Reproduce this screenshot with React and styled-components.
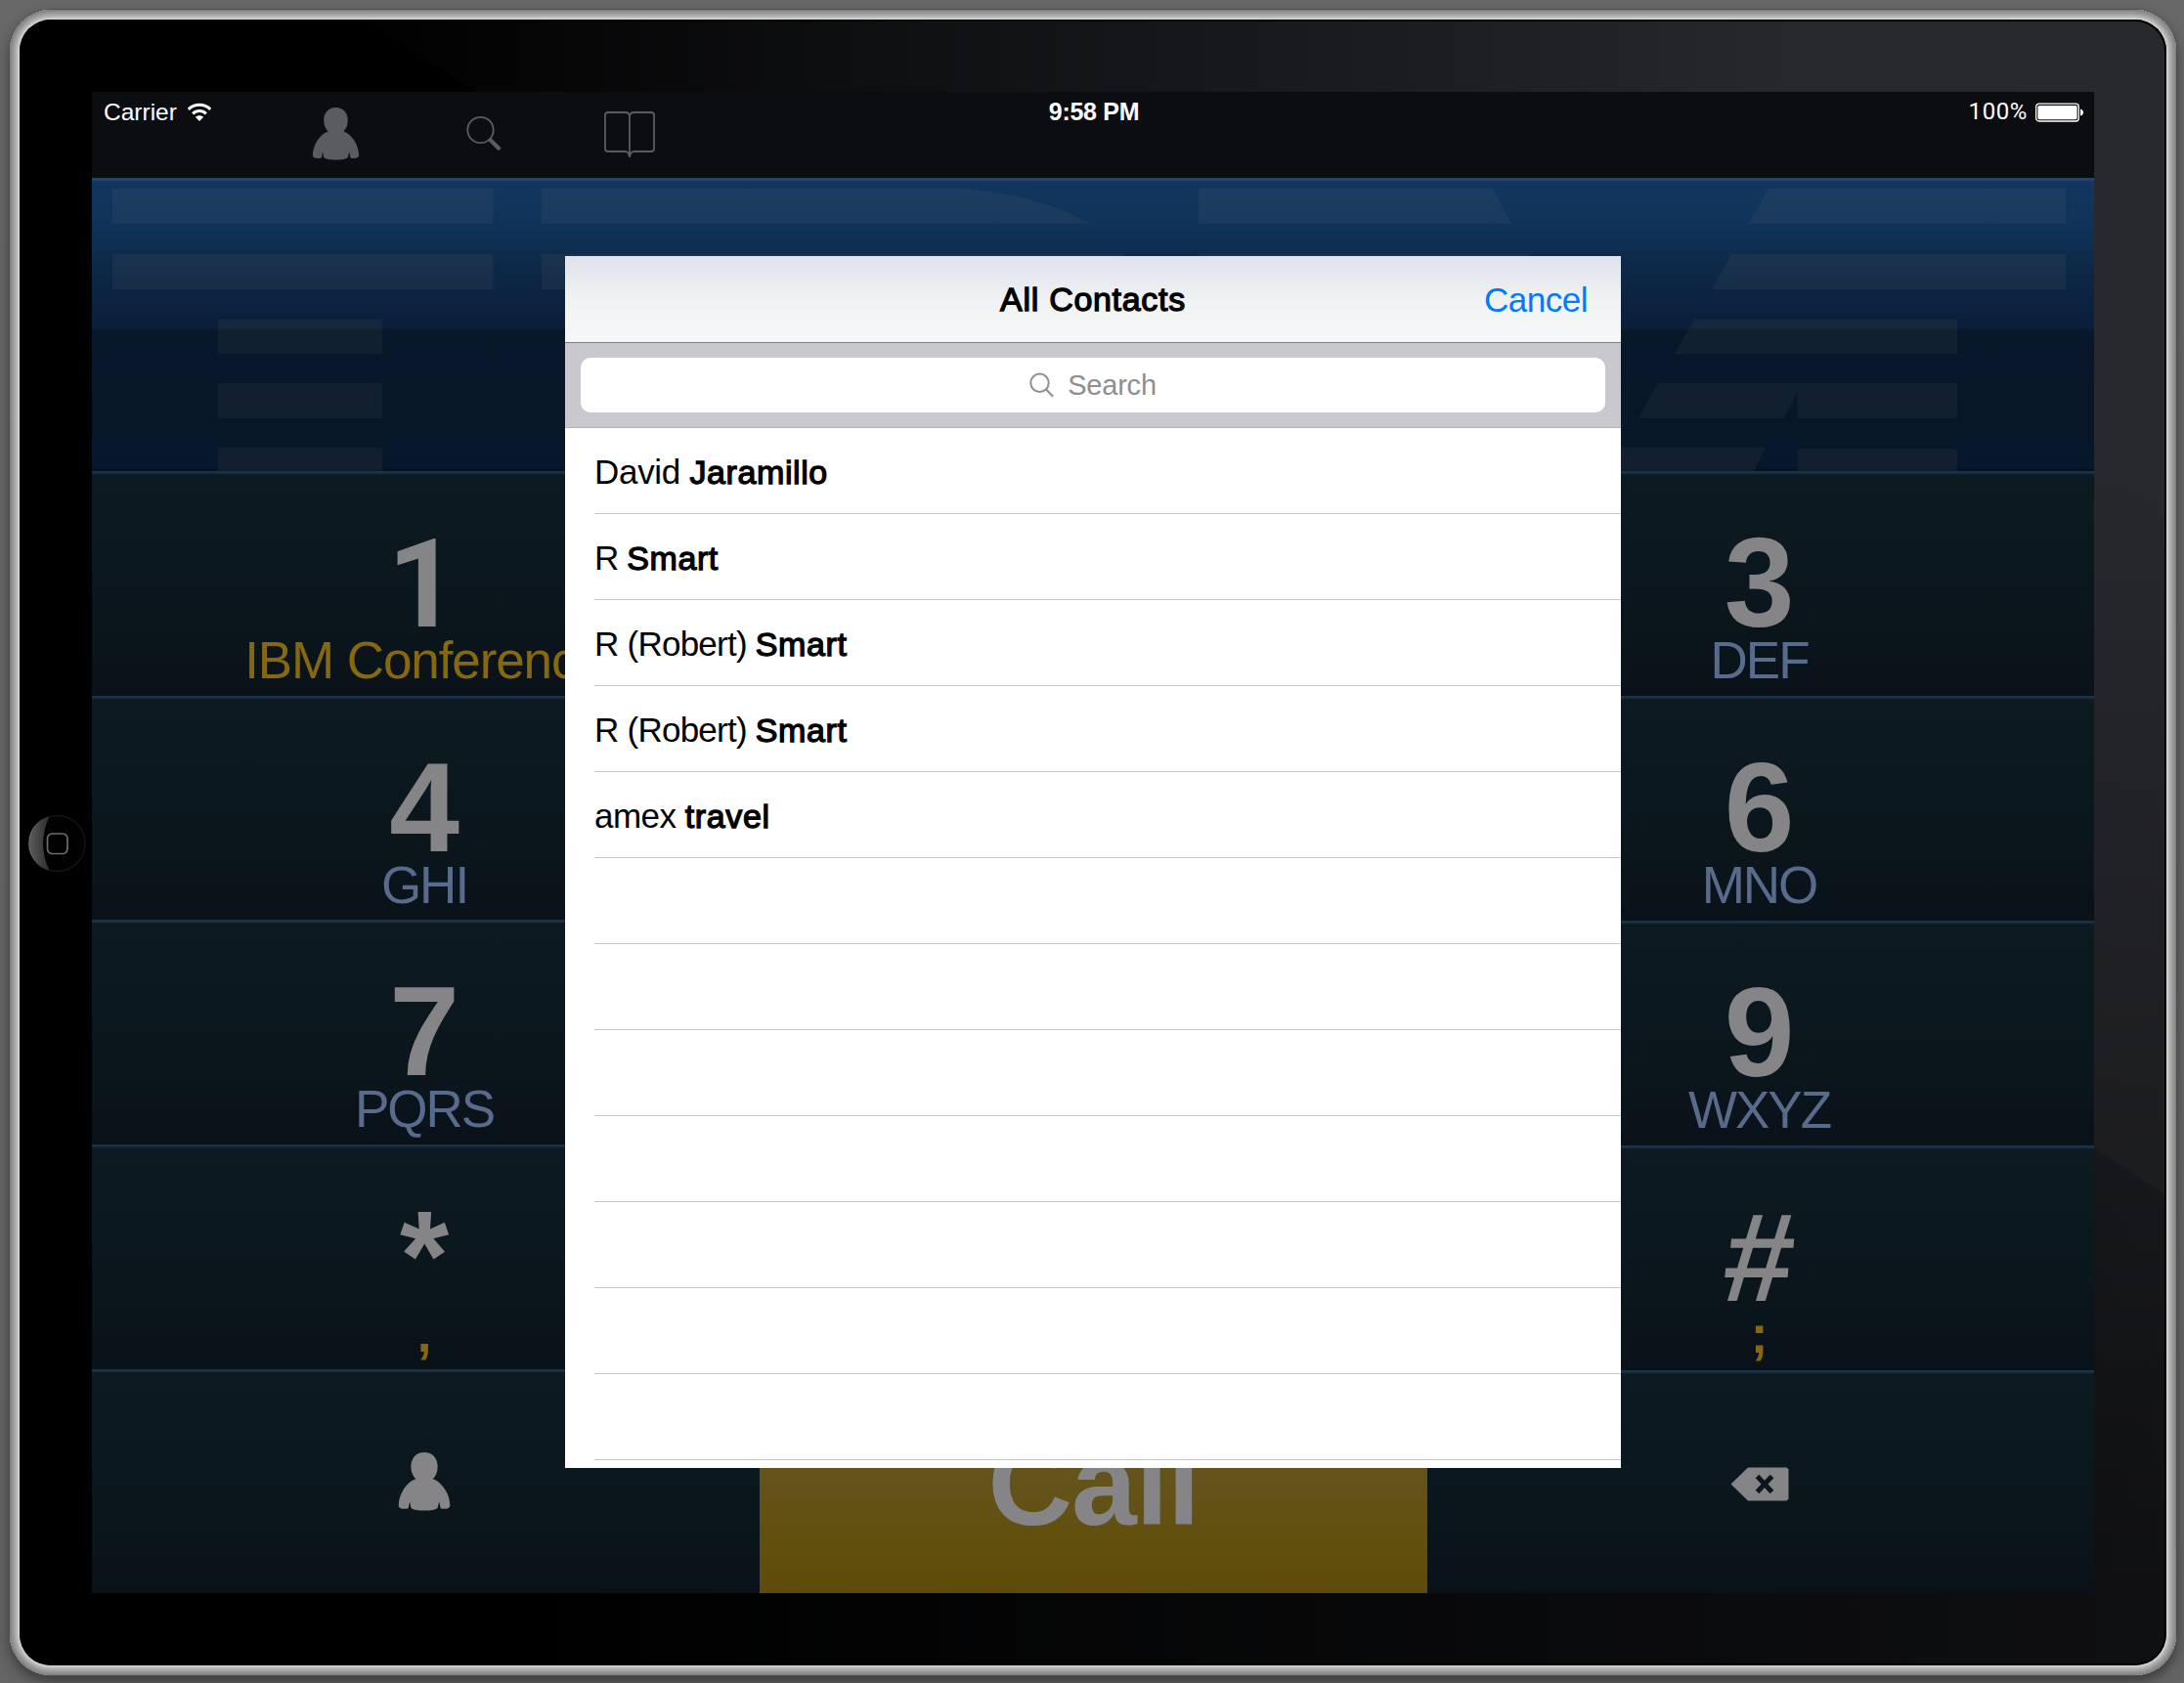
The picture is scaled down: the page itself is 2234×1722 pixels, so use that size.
import React from "react";
import styled, { createGlobalStyle } from "styled-components";

const GlobalStyle = createGlobalStyle`
  * { box-sizing: border-box; }
  html, body { margin: 0; padding: 0; }
  body {
    width: 2234px;
    height: 1722px;
    overflow: hidden;
    background: linear-gradient(#686868, #646464);
    font-family: "Liberation Sans", Arial, sans-serif;
  }
`;

const Desk = styled.main`
  width: 2234px;
  height: 1722px;
  padding: 10px 8px 8px 10px;
  overflow: hidden;
`;

const Rim = styled.div`
  width: 2216px;
  height: 1704px;
  padding: 10px;
  border-radius: 42px;
  background: #d4d4d2;
  box-shadow:
    inset 0 0 0 1px #808080,
    inset 0 0 0 2px #8b8b8b,
    inset 0 0 0 3px #929292,
    inset 0 0 0 4px #999999,
    inset 0 0 0 5px #a1a1a1,
    inset 0 0 0 6px #a9a9a9,
    inset 0 0 0 7px #b2b2b2,
    inset 0 0 0 8px #bcbcbc,
    inset 0 0 0 9px #c8c8c6,
    0 0 0 1px #505050,
    0 6px 14px rgba(0, 0, 0, 0.45);
`;

const Face = styled.div`
  position: relative;
  display: grid;
  grid-template-columns: 74px 2048px 74px;
  grid-template-rows: 74px 1536px 74px;
  width: 2196px;
  height: 1684px;
  border-radius: 32px;
  overflow: hidden;
  background:
    linear-gradient(to bottom, transparent 70%, rgba(0, 0, 0, 0.35) 96%),
    linear-gradient(to right, #000 25%, #0c0d0f 65%, #17181b 100%);

  &::before {
    content: "";
    position: absolute;
    inset: 0;
    clip-path: polygon(0 0, 100% 0, 100% 1203px, 355px 0);
    background:
      linear-gradient(to bottom, transparent 25%, rgba(0, 0, 0, 0.3) 70%),
      linear-gradient(to right, #000 14%, #060607 25%, #0d0e10 37%, #1d1e22 67%, #27282c 82%, #28292d 100%);
  }

  &::after {
    content: "";
    position: absolute;
    inset: 0;
    border-radius: 32px;
    box-shadow: inset 0 0 0 2px #000;
  }
`;

const LeftBezel = styled.div`
  grid-column: 1;
  grid-row: 2;
  z-index: 1;
  display: flex;
  align-items: center;
  justify-content: center;
  padding: 2px 0 0 2px;
`;

const Screen = styled.div`
  grid-column: 2;
  grid-row: 2;
  position: relative;
  z-index: 1;
  display: flex;
  flex-direction: column;
  background: #0b151c;
  overflow: hidden;
`;

const TopBar = styled.header`
  display: grid;
  height: 88px;
  flex: none;
  background: #0b0d11;
`;

const StatusBar = styled.div`
  grid-area: 1 / 1;
  display: grid;
  grid-template-columns: 1fr auto 1fr;
  height: 41px;
  padding: 0 10px 0 12px;
  line-height: 41px;
  color: #fff;
  font-size: 24.5px;
`;

const StatusGroup = styled.div`
  display: flex;
  align-items: center;
  justify-content: ${(p) => (p.$end ? "flex-end" : "flex-start")};
  gap: ${(p) => (p.$end ? "8px" : "10px")};
`;

const Clock = styled.div`
  font-size: 25px;
  font-weight: 700;
  letter-spacing: -0.3px;
`;

const Percent = styled.span`
  font-family: Roboto, "Liberation Sans", sans-serif;
  font-weight: 400;
  font-size: 24px;
  letter-spacing: 0.6px;
`;

const Toolbar = styled.nav`
  grid-area: 1 / 1;
  display: flex;
  align-items: flex-start;
  padding: 16px 0 0 225px;
  color: #5b5c60;

  svg + svg { margin-left: 108px; margin-top: 6px; }
  svg + svg + svg { margin-left: 103px; margin-top: 3px; }
`;

const Banner = styled.section`
  height: 300px;
  flex: none;
  background: linear-gradient(
    #2c4665 0,
    #24446b 2px,
    #12365f 4px,
    #10335a 45px,
    #0d2a49 85px,
    #0c213e 135px,
    #0b1f3b 153px,
    #08182a 157px,
    #071728 250px,
    #08172c 295px,
    #07111f 300px
  );

  svg { display: block; }
`;

const Keypad = styled.section`
  display: grid;
  grid-template-columns: 683px 683px 682px;
  height: 1148px;
`;

const Column = styled.div`
  display: flex;
  flex-direction: column;
  justify-content: flex-end;
`;

const Key = styled.div`
  display: flex;
  flex-direction: column;
  align-items: center;
  flex: none;
  height: ${(p) => p.$height || 230}px;
  padding: 64px 3px 0 0;
  background: linear-gradient(#1c3347 0, #1d3246 2px, #12222e 3px, #0c1a22 4px, #0b171e 50%, #0a1219 100%);
`;

const IconKey = styled(Key)`
  padding-top: ${(p) => p.$top}px;
  color: #858588;
`;

const Digit = styled.div`
  height: 100px;
  line-height: 100px;
  font-size: 129px;
  font-weight: 700;
  color: #858588;
`;

const PlainOne = styled(Digit)`
  font-family: Roboto, "Liberation Sans", sans-serif;
  font-size: 126px;
  line-height: 104px;
  padding-right: 3px;
`;

const Hash = styled(Digit)`
  transform: skewX(-5deg);
`;

const Letters = styled.div`
  height: 60px;
  line-height: 60px;
  font-size: 53px;
  letter-spacing: ${(p) => (p.$gold ? "-1.1px" : "-2px")};
  white-space: nowrap;
  color: ${(p) => (p.$gold ? "#856810" : "#586b8d")};
`;

const Punctuation = styled(Letters)`
  font-weight: 700;
  letter-spacing: 0;
`;

const CallButton = styled.div`
  height: 229px;
  flex: none;
  padding-top: 57px;
  text-align: center;
  line-height: 120px;
  font-size: 120px;
  letter-spacing: -1px;
  font-weight: 700;
  color: #858588;
  background: linear-gradient(#655728 0, #64531c 45%, #62500f 75%, #5f4b09 100%);
`;

const Dialog = styled.section`
  position: absolute;
  left: 484px;
  top: 168px;
  display: flex;
  flex-direction: column;
  width: 1080px;
  height: 1240px;
  background: #fff;
  overflow: hidden;
`;

const DialogHeader = styled.header`
  display: grid;
  grid-template-columns: 1fr auto 1fr;
  height: 89px;
  flex: none;
  padding: 0 34px;
  line-height: 89px;
  border-bottom: 1px solid #7f7f82;
  background: linear-gradient(#dfe3ec 0, #e5e8ed 20%, #eef0f2 45%, #f3f4f4 65%, #f5f6f8 100%);
`;

const Title = styled.h1`
  grid-column: 2;
  margin: 0;
  font-size: 34px;
  font-weight: 400;
  letter-spacing: 0.7px;
  -webkit-text-stroke: 1.3px #000;
`;

const Cancel = styled.div`
  justify-self: end;
  font-size: 35px;
  letter-spacing: -0.5px;
  color: #007aff;
`;

const SearchBar = styled.div`
  height: 87px;
  flex: none;
  padding: 15px 16px;
  background: #c9c8ce;
  border-bottom: 1px solid #b2b2b7;
`;

const SearchField = styled.div`
  display: flex;
  align-items: center;
  justify-content: center;
  gap: 14px;
  height: 56px;
  line-height: 54px;
  border-radius: 10px;
  background: #fff;
  color: #8e8e93;
  font-size: 29px;
  letter-spacing: -0.2px;
`;

const Contacts = styled.ul`
  margin: 0;
  padding: 0 0 0 30px;
  list-style: none;
`;

const Contact = styled.li`
  height: 88px;
  line-height: 89px;
  border-bottom: 1px solid #c8c7cc;
  font-size: 35px;
  letter-spacing: ${(p) => p.$tracking || "-0.5px"};
  white-space: pre;
  color: #000;
`;

const Surname = styled.span`
  font-size: 34px;
  letter-spacing: 0.6px;
  -webkit-text-stroke: 1.3px #000;
`;

function PersonIcon({ width, height }) {
  return (
    <svg width={width} height={height} viewBox="0 0 48 54" fill="currentColor">
      <path d="M24 0C31.500 0 36.300 5.500 36.300 13C36.300 18 34.500 22 31.800 24.500C40 27 47.500 38 47.700 49C47.500 52 42.500 52.600 39 51.500L37.700 45.500L36.300 51C34 54.500 14 54.500 11.800 51L10.600 45.500L9.300 51.500C5 52.600 .5 52 .3 49C.5 38 8 27 16.300 24.500C13.500 22 11.700 18 11.700 13C11.700 5.500 16.500 0 24 0Z" />
    </svg>
  );
}

function SearchToolIcon() {
  return (
    <svg width="38" height="38" viewBox="0 0 38 38" fill="none" stroke="currentColor">
      <circle cx="15.500" cy="17" r="13.200" strokeWidth="1.800" />
      <path d="M24.800 26.500L35.300 37" strokeWidth="4" />
    </svg>
  );
}

function BookIcon() {
  return (
    <svg width="54" height="50" viewBox="0 0 54 50" fill="none" stroke="currentColor" strokeWidth="1.800">
      <path d="M27 5.500C26.500 3 25 2 22.500 2H5Q2 2 2 5V39Q2 42 5 42H22.500C25.500 42 26.500 44 27 48C27.500 44 28.500 42 31.500 42H49Q52 42 52 39V5Q52 2 49 2H31.500C29 2 27.500 3 27 5.500V47" />
    </svg>
  );
}

function WifiIcon() {
  return (
    <svg width="26" height="20" viewBox="0 0 26 20" fill="none" stroke="#fff" strokeWidth="3">
      <path d="M1.800 6.800C8 .8 18 .8 24.200 6.800" />
      <path d="M6.200 11.300C10 7.700 16 7.700 19.800 11.300" />
      <path d="M13 19L8.800 14.800C11.200 12.600 14.800 12.600 17.200 14.800Z" fill="#fff" stroke="none" />
    </svg>
  );
}

function BatteryIcon() {
  return (
    <svg width="50" height="20" viewBox="0 0 50 20">
      <rect x=".7" y="1.200" width="43.600" height="17.800" rx="3" fill="none" stroke="#fff" strokeWidth="1.300" />
      <rect x="2.400" y="2.900" width="40.200" height="14.400" rx="1.500" fill="#fff" />
      <path d="M46 6.500Q49 7.500 49 10Q49 12.500 46 13.500Z" fill="#fff" />
    </svg>
  );
}

function BackspaceIcon() {
  return (
    <svg width="60" height="35" viewBox="0 0 60 35">
      <path d="M18 .5H57.500L59.500 2.500V32.500L57.500 34.500H18L.5 17.500Z" fill="currentColor" />
      <path d="M27.500 9.500L42.500 25.500M42.500 9.500L27.500 25.500" stroke="#0b161e" strokeWidth="5" />
    </svg>
  );
}

function FieldSearchIcon() {
  return (
    <svg width="25" height="26" viewBox="0 0 25 26" fill="none" stroke="#8e8e93" strokeWidth="2">
      <circle cx="10.500" cy="10.800" r="9.200" />
      <path d="M17 17.300L24 24.800" />
    </svg>
  );
}

function HomeButton() {
  return (
    <svg width="60" height="60" viewBox="0 0 60 60">
      <defs>
        <linearGradient id="crescent" x1="0" x2="1">
          <stop offset="0" stopColor="#5a5a5a" />
          <stop offset="1" stopColor="#2e2e2e" />
        </linearGradient>
        <linearGradient id="ring" x1="0" x2="1">
          <stop offset="0" stopColor="#777" />
          <stop offset=".35" stopColor="#161616" />
          <stop offset="1" stopColor="#111" />
        </linearGradient>
      </defs>
      <circle cx="30.500" cy="30" r="28.500" fill="#010101" stroke="url(#ring)" strokeWidth="1.500" />
      <path d="M22.500 2.700A28.500 28.500 0 0 0 22.500 57.300C14 40 14 20 22.500 2.700Z" fill="url(#crescent)" />
      <rect x="20.500" y="20" width="20.500" height="20.500" rx="5" fill="#020202" stroke="#6c6c6c" strokeWidth="1.700" />
    </svg>
  );
}

function StripedLogo() {
  return (
    <svg width="2048" height="300" viewBox="94 182 2048 300" fill="#ffdcb4" fillOpacity=".048">
      <path d="M115 193H504.500V229H115ZM115 260H504.500V296H115ZM223 326.500H391V362H223ZM223 392H391V428H223ZM223 458H391V482H223Z" />
      <path d="M554 193H985C1035 197 1082 209 1115 229H554ZM554 260H1150V296H554Z" />
      <path d="M1226 193H1527L1546 229H1226ZM1226 260H1563L1577 296H1226Z" />
      <path d="M1809 193H2113V229H1788.500ZM1771 260H2113V296H1751ZM1733 326.500H2002V362H1713Z" />
      <path d="M1696 392H2002V428H1838.500V400L1825 428H1676ZM1650 458H1806.600L1794 482H1650ZM1838.500 459H2002V482H1838.500Z" />
    </svg>
  );
}

const contacts = [
  ["David", "Jaramillo", "-0.3px"],
  ["R", "Smart", "-0.9px"],
  ["R (Robert)", "Smart", "-0.75px"],
  ["R (Robert)", "Smart", "-0.75px"],
  ["amex", "travel", "-0.5px"],
];

const emptyRows = [1, 2, 3, 4, 5, 6, 7];

export default function App() {
  return (
    <Desk>
      <GlobalStyle />
      <Rim>
        <Face>
          <LeftBezel>
            <HomeButton />
          </LeftBezel>
          <Screen>
            <TopBar>
              <StatusBar>
                <StatusGroup>
                  <span>Carrier</span>
                  <WifiIcon />
                </StatusGroup>
                <Clock>9:58 PM</Clock>
                <StatusGroup $end>
                  <Percent>100%</Percent>
                  <BatteryIcon />
                </StatusGroup>
              </StatusBar>
              <Toolbar>
                <PersonIcon width={49} height={54} />
                <SearchToolIcon />
                <BookIcon />
              </Toolbar>
            </TopBar>
            <Banner>
              <StripedLogo />
            </Banner>
            <Keypad>
              <Column>
                <Key>
                  <PlainOne>1</PlainOne>
                  <Letters $gold>IBM Conference</Letters>
                </Key>
                <Key $height={229}>
                  <Digit>4</Digit>
                  <Letters>GHI</Letters>
                </Key>
                <Key>
                  <Digit>7</Digit>
                  <Letters>PQRS</Letters>
                </Key>
                <Key>
                  <Digit>*</Digit>
                  <Punctuation $gold>,</Punctuation>
                </Key>
                <IconKey $height={229} $top={85}>
                  <PersonIcon width={54} height={60} />
                </IconKey>
              </Column>
              <Column>
                <CallButton>Call</CallButton>
              </Column>
              <Column>
                <Key>
                  <Digit>3</Digit>
                  <Letters>DEF</Letters>
                </Key>
                <Key>
                  <Digit>6</Digit>
                  <Letters>MNO</Letters>
                </Key>
                <Key>
                  <Digit>9</Digit>
                  <Letters>WXYZ</Letters>
                </Key>
                <Key>
                  <Hash>#</Hash>
                  <Punctuation $gold>;</Punctuation>
                </Key>
                <IconKey $height={228} $top={99}>
                  <BackspaceIcon />
                </IconKey>
              </Column>
            </Keypad>
            <Dialog>
              <DialogHeader>
                <Title>All Contacts</Title>
                <Cancel>Cancel</Cancel>
              </DialogHeader>
              <SearchBar>
                <SearchField>
                  <FieldSearchIcon />
                  <span>Search</span>
                </SearchField>
              </SearchBar>
              <Contacts>
                {contacts.map(([first, last, tracking], i) => (
                  <Contact key={i} $tracking={tracking}>
                    {first + " "}
                    <Surname>{last}</Surname>
                  </Contact>
                ))}
                {emptyRows.map((n) => (
                  <Contact key={"empty" + n} />
                ))}
              </Contacts>
            </Dialog>
          </Screen>
        </Face>
      </Rim>
    </Desk>
  );
}
